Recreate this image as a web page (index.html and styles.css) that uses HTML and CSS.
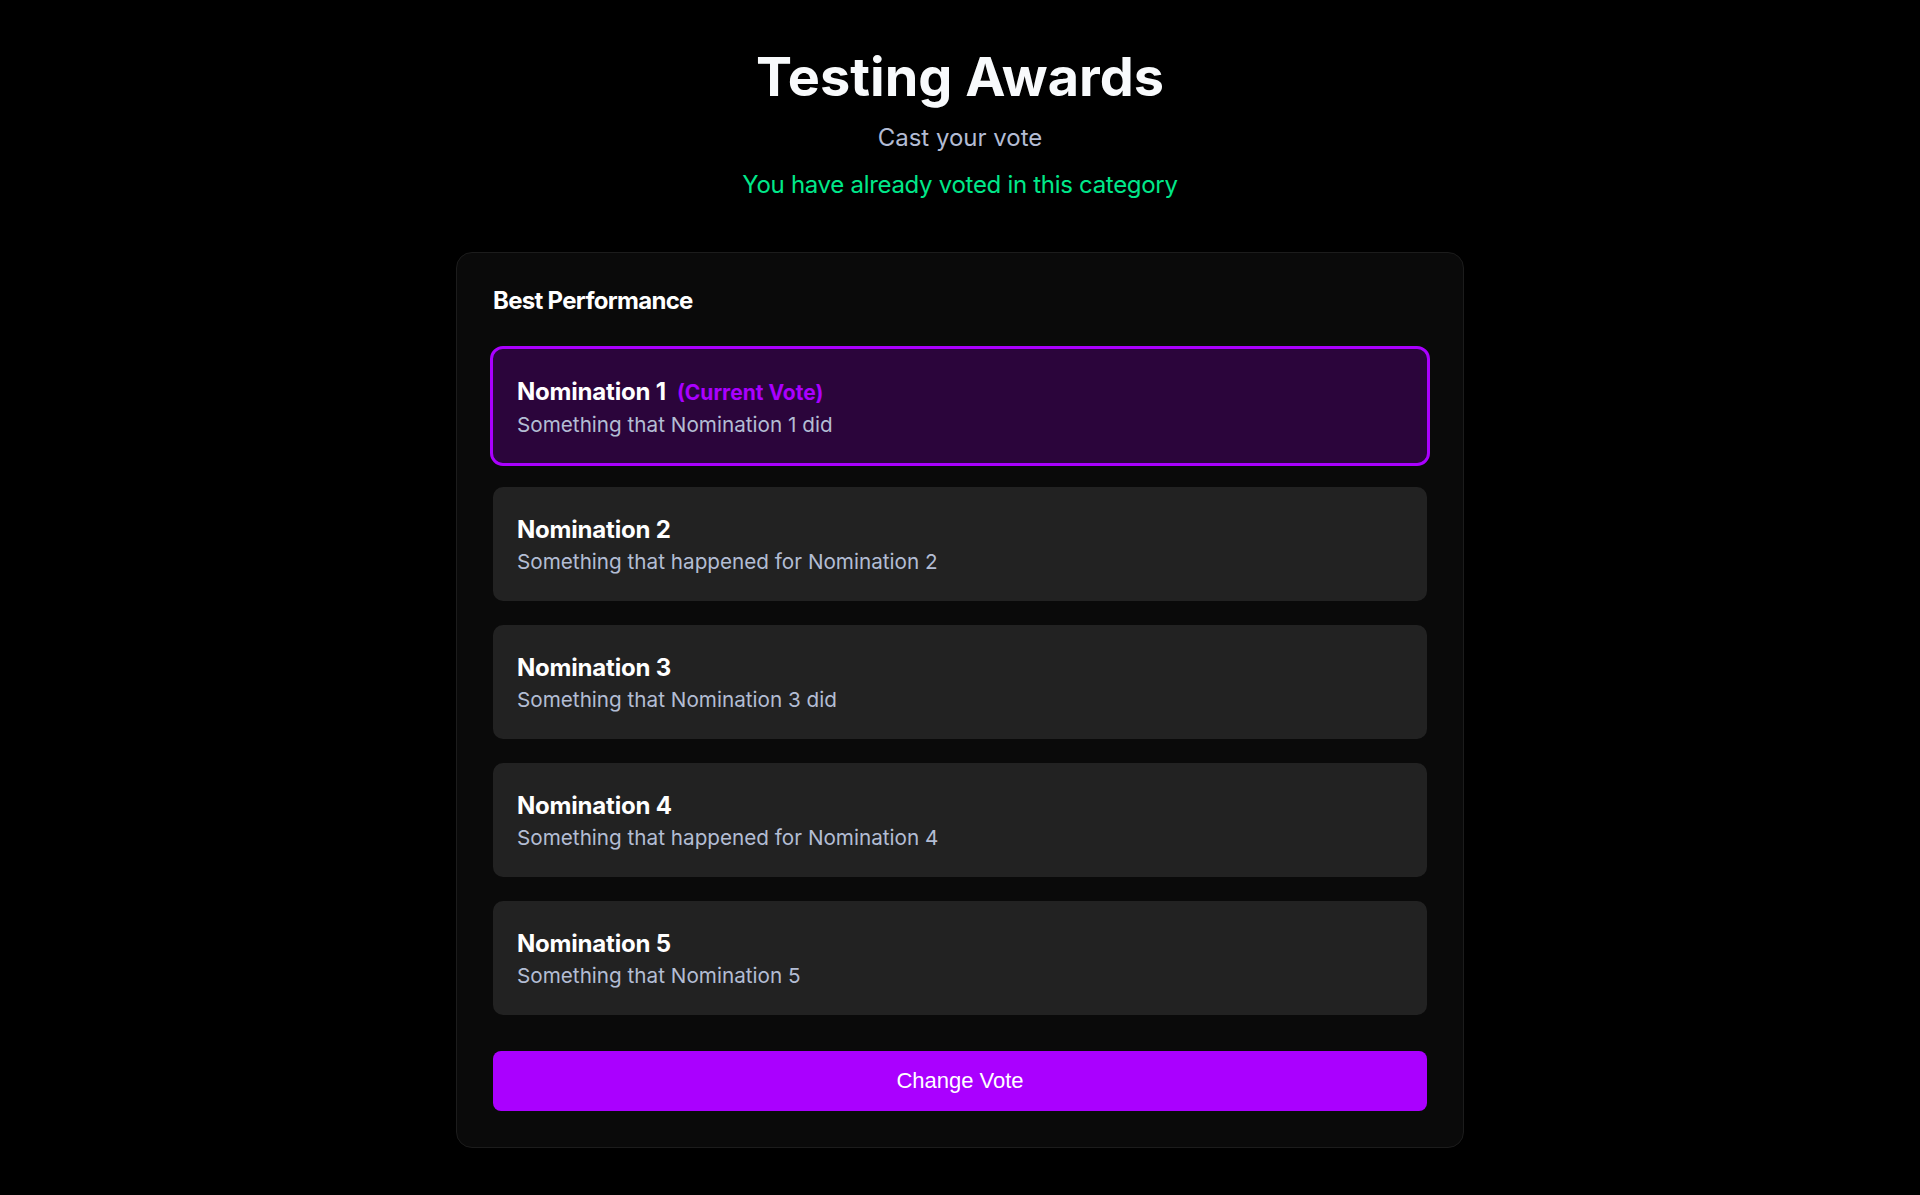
FILE: index.html
```html
<!DOCTYPE html>
<html lang="en">
<head>
<meta charset="utf-8">
<title>Testing Awards</title>
<link rel="stylesheet" href="styles.css">
</head>
<body>
<main class="page">
  <header class="header">
    <h1 class="title">Testing Awards</h1>
    <p class="subtitle">Cast your vote</p>
    <p class="notice">You have already voted in this category</p>
  </header>
  <section class="card">
    <h2 class="category">Best Performance</h2>
    <div class="nominations">
      <div class="nomination selected">
        <div class="nom-title">Nomination 1<span class="current">(Current Vote)</span></div>
        <div class="nom-desc">Something that Nomination 1 did</div>
      </div>
      <div class="nomination">
        <div class="nom-title">Nomination 2</div>
        <div class="nom-desc">Something that happened for Nomination 2</div>
      </div>
      <div class="nomination">
        <div class="nom-title">Nomination 3</div>
        <div class="nom-desc">Something that Nomination 3 did</div>
      </div>
      <div class="nomination">
        <div class="nom-title">Nomination 4</div>
        <div class="nom-desc">Something that happened for Nomination 4</div>
      </div>
      <div class="nomination">
        <div class="nom-title">Nomination 5</div>
        <div class="nom-desc">Something that Nomination 5</div>
      </div>
    </div>
    <button class="vote-btn" type="button">Change Vote</button>
  </section>
</main>
</body>
</html>
```
FILE: styles.css
```css
* { box-sizing: border-box; }
html, body { margin: 0; padding: 0; }
body {
  background: #000;
  color: #f8fafc;
  font-family: Inter, "Noto Sans", sans-serif;
  min-height: 1195px;
}
.page {
  padding-top: 45px;
  display: flex;
  flex-direction: column;
  align-items: center;
}
.header { text-align: center; }
.title {
  margin: 0;
  font-size: 54px;
  line-height: 64px;
  font-weight: 700;
  color: #f8fafc;
}
.subtitle {
  margin: 13px 0 0;
  font-size: 24px;
  line-height: 32px;
  color: #b3bcd4;
}
.notice {
  margin: 15px 0 0;
  font-size: 24px;
  line-height: 32px;
  letter-spacing: -0.3px;
  color: #00e88a;
}
.card {
  margin-top: 51px;
  width: 1008px;
  background: #0a0a0a;
  border: 1px solid #1c1c1c;
  border-radius: 16px;
  padding: 32px 36px 36px;
  display: flex;
  flex-direction: column;
}
.category {
  margin: 0;
  font-size: 24px;
  line-height: 32px;
  font-weight: 700;
  color: #fff;
  letter-spacing: -0.7px;
}
.nominations {
  margin-top: 32px;
  display: flex;
  flex-direction: column;
  gap: 24px;
}
.nomination {
  height: 114px;
  background: #222;
  border-radius: 10px;
  padding: 27px 24px 25px;
}
.nomination.selected {
  background: #2b053b;
  outline: 3px solid #aa00ff;
}
.nom-title {
  font-size: 24px;
  line-height: 32px;
  font-weight: 700;
  color: #fff;
  letter-spacing: -0.2px;
}
.current {
  margin-left: 11px;
  font-size: 21px;
  font-weight: 700;
  letter-spacing: 0;
  color: #aa00ff;
}
.nom-desc {
  margin-top: 2px;
  font-size: 20.7px;
  line-height: 28px;
  color: #b3bdd4;
}
.vote-btn {
  margin-top: 36px;
  height: 60px;
  border: 0;
  border-radius: 8px;
  background: #aa00ff;
  color: #fff;
  font-family: "Liberation Sans", Arial, sans-serif;
  font-size: 22px;
  font-weight: 500;
  cursor: pointer;
}
```
